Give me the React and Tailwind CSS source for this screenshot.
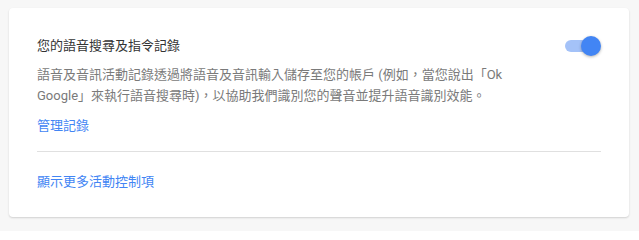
import React from 'react'

const font = { fontFamily: 'Roboto, "Noto Sans CJK TC", sans-serif' }

const Toggle = () => {
  return (
    <div className="relative w-[36px] h-[20px] shrink-0">
      <div className="absolute left-0 top-[4px] w-[34px] h-[12px] rounded-full bg-[#a4c2f8]"></div>
      <div className="absolute right-0 top-0 w-[20px] h-[20px] rounded-full bg-[#4285f4] shadow-[0_1px_3px_rgba(0,0,0,0.3)]"></div>
    </div>
  )
}

const App = () => {
  return (
    <div className="w-[639px] h-[231px] bg-[#f7f7f7] pt-[8px] pl-[9px]" style={font}>
      <div className="w-[620px] h-[209px] bg-white rounded-[4px] shadow-[0_1px_2px_rgba(0,0,0,0.16)] pt-[28px] pl-[28px] pr-[28px]">
        <div className="flex flex-row items-center justify-between h-[20px]">
          <p className="text-[13px] leading-[20px] text-[#333333]">您的語音搜尋及指令記錄</p>
          <Toggle />
        </div>
        <p className="mt-[8px] max-w-[500px] text-[13px] leading-[21px] text-[#7a7a7a]">
          語音及音訊活動記錄透過將語音及音訊輸入儲存至您的帳戶 (例如，當您說出「Ok Google」來執行語音搜尋時)，以協助我們識別您的聲音並提升語音識別效能。
        </p>
        <p className="mt-[10px] text-[13px] leading-[20px] text-[#4285f4]">管理記錄</p>
        <hr className="mt-[15px] border-0 border-t border-[#e0e0e0]" />
        <p className="mt-[20px] text-[13px] leading-[20px] text-[#4285f4]">顯示更多活動控制項</p>
      </div>
    </div>
  )
}

export default App
